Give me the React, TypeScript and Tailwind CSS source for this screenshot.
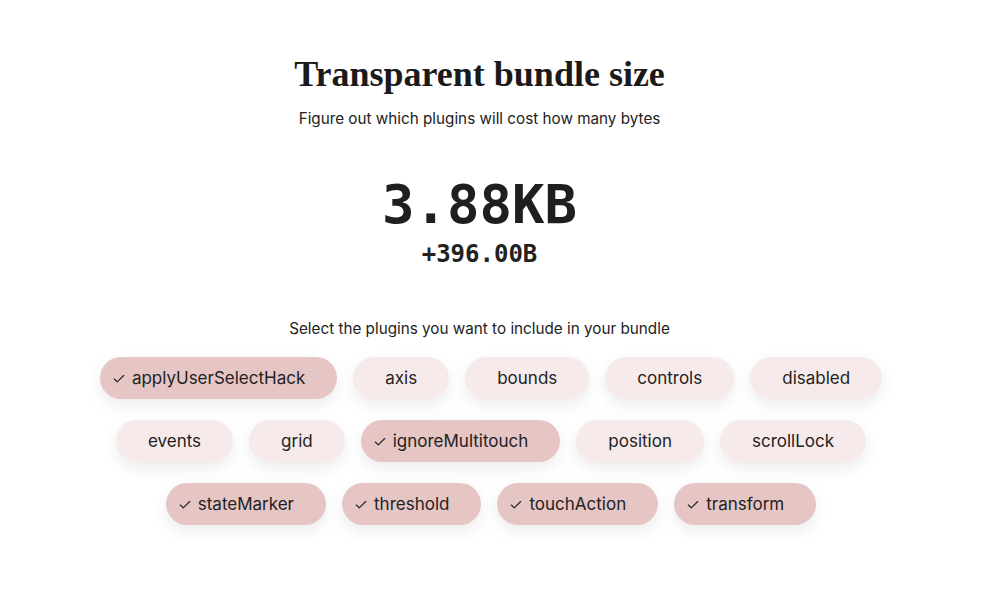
import { Check } from "lucide-react";

interface Plugin {
  name: string;
  selected: boolean;
}

const plugins: Plugin[] = [
  { name: "applyUserSelectHack", selected: true },
  { name: "axis", selected: false },
  { name: "bounds", selected: false },
  { name: "controls", selected: false },
  { name: "disabled", selected: false },
  { name: "events", selected: false },
  { name: "grid", selected: false },
  { name: "ignoreMultitouch", selected: true },
  { name: "position", selected: false },
  { name: "scrollLock", selected: false },
  { name: "stateMarker", selected: true },
  { name: "threshold", selected: true },
  { name: "touchAction", selected: true },
  { name: "transform", selected: true },
];

export default function App() {
  return (
    <div className="min-h-screen bg-white text-[#1f1f1f] font-['Inter',sans-serif]">
      <div className="flex flex-col items-center pt-[52px] pr-[31px]">
        <h1 className="font-['Liberation_Serif',serif] font-bold text-[36px] leading-[44px] text-[#1a1a1a]">
          Transparent bundle size
        </h1>
        <p className="mt-[11px] text-[15.25px] leading-6 text-[#222]">
          Figure out which plugins will cost how many bytes
        </p>
        <div className="mt-[44px] font-['DejaVu_Sans_Mono',monospace] font-bold text-[54px] leading-[60px] text-[#1f1f1f]">
          3.88KB
        </div>
        <div className="mt-1 font-['DejaVu_Sans_Mono',monospace] font-bold text-[24px] leading-[30px] text-[#222]">
          +396.00B
        </div>
        <p className="mt-[49px] text-[15.25px] leading-[22px] text-[#222]">
          Select the plugins you want to include in your bundle
        </p>
      </div>
      <div className="mt-[17px] flex justify-center">
        <div className="ml-[-8px] flex w-[820px] flex-wrap justify-center gap-x-4 gap-y-[21px]">
          {plugins.map((p) => (
            <button
              key={p.name}
              className={
                p.selected
                  ? "flex h-[42px] items-center rounded-full bg-[#e6c5c5] pl-3 pr-8 pt-[2px] text-[17px] text-[#222] shadow-[0_6px_16px_rgba(0,0,0,0.08)]"
                  : "flex h-[42px] items-center rounded-full bg-[#f6eaeb] px-8 pt-[2px] text-[17px] text-[#222] shadow-[0_6px_16px_rgba(0,0,0,0.08)]"
              }
            >
              {p.selected && <Check className="mr-1.5 h-3.5 w-3.5" strokeWidth={2} />}
              {p.name}
            </button>
          ))}
        </div>
      </div>
    </div>
  );
}
